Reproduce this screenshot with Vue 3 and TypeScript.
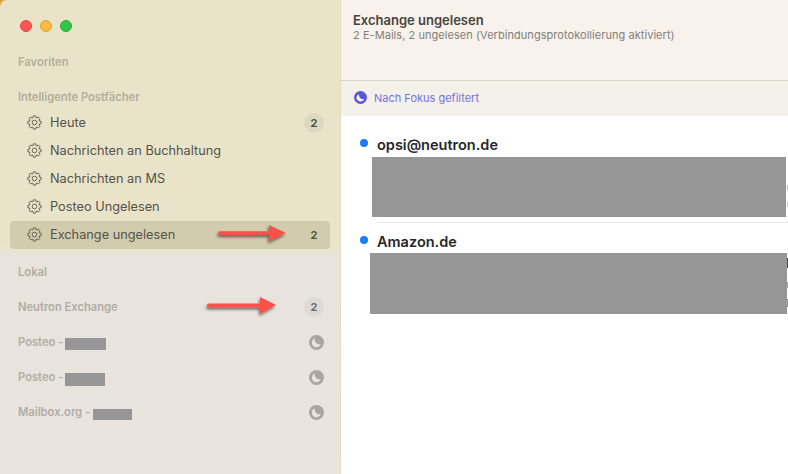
<script setup lang="ts">
function gearPath(): string {
  const teeth = 8;
  const cx = 7.5, cy = 7.5, outer = 6.7, inner = 5.1;
  const pts: string[] = [];
  for (let i = 0; i < teeth; i++) {
    const a = (i / teeth) * Math.PI * 2;
    const w = Math.PI / teeth;
    const seq: [number, number][] = [
      [a - w * 0.5, outer],
      [a + w * 0.5, outer],
      [a + w * 0.72, inner],
      [a + w * 1.28, inner],
    ];
    for (const [t, r] of seq) {
      pts.push(`${(cx + r * Math.cos(t)).toFixed(2)} ${(cy + r * Math.sin(t)).toFixed(2)}`);
    }
  }
  return "M" + pts.join("L") + "Z";
}
const gear = gearPath();
const smart = [
  { name: "Heute", badge: true, count: "2" },
  { name: "Nachrichten an Buchhaltung" },
  { name: "Nachrichten an MS" },
  { name: "Posteo Ungelesen" },
  { name: "Exchange ungelesen", selected: true, count: "2" },
];
const accounts = [
  { name: "Posteo -", w: 41, h: 12, top: 2, gap: 2 },
  { name: "Posteo -", w: 40, h: 13, top: 2, gap: 2 },
  { name: "Mailbox.org -", w: 39, h: 11, top: 2, gap: 3 },
];
const mails = [
  {
    from: "opsi@neutron.de", left: -5, right: 2, h: 60,
    frags: [
      { top: 49, h: 5, c: "#bdbdbd" },
      { top: 66, h: 5, c: "#cfcfcf" },
    ],
  },
  {
    from: "Amazon.de", left: -7, right: 1, h: 61,
    frags: [
      { top: 35, h: 10, c: "#444444" },
      { top: 59, h: 6, c: "#aaaaaa" },
      { top: 76, h: 8, c: "#999999" },
    ],
  },
];
</script>

<template>
  <div class="window">
    <span class="corner"></span>
    <aside class="sidebar">
      <div class="lights">
        <span class="light red"></span>
        <span class="light yellow"></span>
        <span class="light green"></span>
      </div>
      <div class="section first">Favoriten</div>
      <div class="section second">Intelligente Postfächer</div>
      <div class="rows">
        <div v-for="r in smart" :key="r.name" class="row" :class="{ selected: r.selected }">
          <svg class="gear" width="15" height="15" viewBox="0 0 15 15">
            <path :d="gear" fill="none" stroke="#5c594b" stroke-width="0.9" stroke-linejoin="round" />
            <circle cx="7.5" cy="7.5" r="2.3" fill="none" stroke="#5c594b" stroke-width="0.9" />
          </svg>
          <span class="row-name">{{ r.name }}</span>
          <span v-if="r.count" class="count" :class="{ pill: r.badge }">{{ r.count }}</span>
        </div>
      </div>
      <div class="lower">
        <div class="account">Lokal</div>
        <div class="account">
          <span>Neutron Exchange</span>
          <span class="count pill muted">2</span>
        </div>
        <div v-for="(a, i) in accounts" :key="i" class="account">
          <span class="acc-name">{{ a.name }}<i class="redact" :style="{ width: a.w + 'px', height: a.h + 'px', top: a.top + 'px', marginLeft: a.gap + 'px' }"></i></span>
          <svg class="moon" width="15" height="15" viewBox="0 0 14 14">
            <circle cx="7" cy="7" r="7" fill="#aaa69f" />
            <path d="M5.4 3.1A4.3 4.3 0 1 0 11 8.6A4.6 4.6 0 0 1 5.4 3.1Z" fill="#e9e4de" />
          </svg>
        </div>
      </div>
    </aside>

    <main class="content">
      <header class="head">
        <div class="title">Exchange ungelesen</div>
        <div class="sub">2 E-Mails, 2 ungelesen (Verbindungsprotokollierung aktiviert)</div>
      </header>
      <div class="filter">
        <svg width="13" height="13" viewBox="0 0 14 14">
          <circle cx="7" cy="7" r="7" fill="#5856d6" />
          <path d="M5.4 3.1A4.3 4.3 0 1 0 11 8.6A4.6 4.6 0 0 1 5.4 3.1Z" fill="#f4f0ea" />
        </svg>
        <span>Nach Fokus gefiltert</span>
      </div>
      <div class="list">
        <article v-for="(m, i) in mails" :key="m.from" class="mail" :class="{ sep: i > 0 }">
          <span class="dot"></span>
          <div class="from">{{ m.from }}</div>
          <div class="body" :style="{ height: m.h + 'px', marginLeft: m.left + 'px', marginRight: m.right + 'px' }"></div>
          <span
            v-for="(f, j) in m.frags"
            :key="j"
            class="frag"
            :style="{ top: f.top + 'px', height: f.h + 'px', background: f.c }"
          ></span>
        </article>
      </div>
    </main>

    <svg class="arrows" width="788" height="474" viewBox="0 0 788 474">
      <defs>
        <filter id="arrow-shadow" x="-20%" y="-60%" width="140%" height="240%">
          <feDropShadow dx="-1" dy="2" stdDeviation="1.6" flood-color="#000" flood-opacity="0.55" />
        </filter>
      </defs>
      <g fill="#fb5148" filter="url(#arrow-shadow)">
        <path d="M220 231.2H269V225L286 233L269 241.5V235H220A1.9 1.9 0 0 1 220 231.2Z" />
        <path d="M209 303.5H260V297L276 305L260 314V307.5H209A2 2 0 0 1 209 303.5Z" />
      </g>
    </svg>
  </div>
</template>

<style>
html, body { margin: 0; background: #fff; }
</style>

<style scoped>
.window {
  position: relative;
  width: 788px;
  height: 474px;
  overflow: hidden;
  display: flex;
  font-family: Inter, "Noto Sans", sans-serif;
  background: #fff;
}
.corner {
  position: absolute;
  left: 0;
  top: 0;
  width: 8px;
  height: 8px;
  background: #d9a63f;
}
.sidebar {
  position: relative;
  width: 341px;
  flex: none;
  height: 474px;
  box-sizing: border-box;
  border-right: 1px solid #e2dcc0;
  border-top-left-radius: 7px;
  background: linear-gradient(180deg, #e9e4c9 0, #e9e4c9 246px, #e8e3dc 256px, #e9e4de 474px);
}
.lights {
  display: flex;
  gap: 8px;
  padding: 20px 0 0 20px;
  height: 12px;
}
.light {
  width: 12px;
  height: 12px;
  border-radius: 50%;
  box-sizing: border-box;
}
.red { background: #fc5753; border: 1px solid #df4744; }
.yellow { background: #fdbc40; border: 1px solid #de9f34; }
.green { background: #33c748; border: 1px solid #27aa35; }
.section, .account {
  font-size: 11.2px;
  font-weight: 600;
  line-height: 14px;
  color: #b2ae99;
  padding-left: 18px;
}
.section.first { margin-top: 23px; }
.section.second { margin-top: 21px; }
.rows {
  margin-top: 5px;
  padding: 0 10px;
}
.row {
  height: 28px;
  display: flex;
  align-items: center;
  border-radius: 4px;
  padding-left: 17px;
  padding-right: 6px;
  box-sizing: border-box;
}
.row.selected { background: #d1ccae; }
.gear { flex: none; margin-bottom: 1px; }
.row-name {
  margin-left: 8px;
  padding-bottom: 1px;
  font-size: 12.75px;
  color: #55524a;
  flex: 1;
}
.count {
  width: 20px;
  height: 20px;
  line-height: 20px;
  text-align: center;
  border-radius: 50%;
  font-size: 11px;
  font-weight: 700;
  color: #55513e;
  flex: none;
  padding: 0;
}
.pill { background: #dcd7be; }
.pill.muted { background: #dedad5; color: #6e6b66; }
.lower {
  margin-top: 16px;
}
.account {
  height: 35px;
  line-height: 14px;
  display: flex;
  align-items: center;
  justify-content: space-between;
  box-sizing: border-box;
  padding-right: 16px;
  color: #b0aca6;
  margin-bottom: 0;
}
.lower .account:first-child { height: 14px; margin-bottom: 10.5px; }
.acc-name { display: inline-flex; align-items: center; }
.redact {
  display: inline-block;
  background: #969696;
  position: relative;
}
.moon { flex: none; }
.content {
  flex: 1;
  min-width: 0;
  display: flex;
  flex-direction: column;
}
.head {
  height: 81px;
  box-sizing: border-box;
  background: #f9f2ec;
  border-bottom: 1px solid #d9d4c8;
  padding: 12px 12px 0;
}
.title {
  font-size: 13px;
  font-weight: 600;
  line-height: 16px;
  color: #47443f;
}
.sub {
  font-size: 11px;
  letter-spacing: 0.05px;
  line-height: 14px;
  color: #827e79;
}
.filter {
  height: 35px;
  box-sizing: border-box;
  background: #f4f0ea;
  display: flex;
  align-items: center;
  gap: 7px;
  padding: 0 0 2px 13px;
  font-size: 11px;
  color: #7672dd;
}
.list { flex: 1; background: #fff; padding-top: 20px; }
.mail {
  position: relative;
  margin-left: 36px;
  height: 86px;
}
.mail.sep {
  border-top: 1px solid #e6e6e6;
  padding-top: 10px;
}
.dot {
  position: absolute;
  left: -17px;
  top: 3px;
  width: 8px;
  height: 8px;
  border-radius: 50%;
  background: #1a7cf7;
}
.mail.sep .dot { top: 13px; }
.from {
  font-size: 14.5px;
  font-weight: 600;
  line-height: 18px;
  color: #26262a;
}
.body {
  background: #969696;
  margin-top: 3px;
}
.mail.sep .body { margin-top: 2px; }
.frag {
  position: absolute;
  right: 0;
  width: 1px;
}
.arrows {
  position: absolute;
  inset: 0;
  pointer-events: none;
}
</style>
